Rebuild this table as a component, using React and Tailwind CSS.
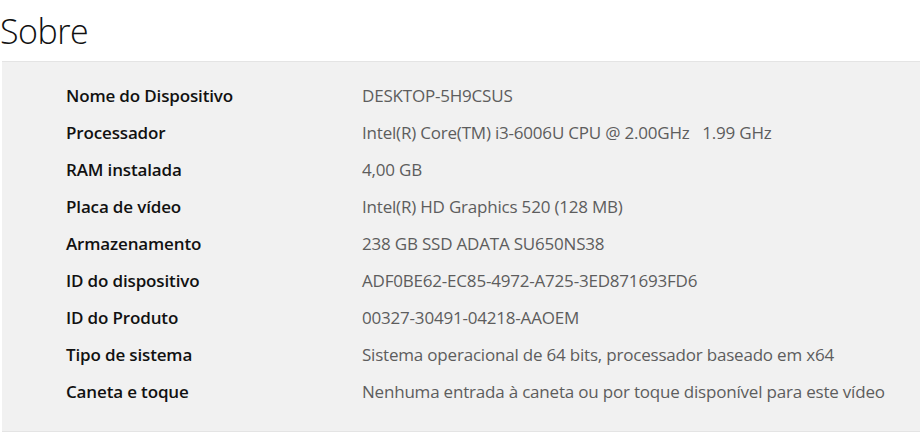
import React from "react";

const specs = [
  ["Nome do Dispositivo", "DESKTOP-5H9CSUS"],
  ["Processador", "Intel(R) Core(TM) i3-6006U CPU @ 2.00GHz   1.99 GHz"],
  ["RAM instalada", "4,00 GB"],
  ["Placa de vídeo", "Intel(R) HD Graphics 520 (128 MB)"],
  ["Armazenamento", "238 GB SSD ADATA SU650NS38"],
  ["ID do dispositivo", "ADF0BE62-EC85-4972-A725-3ED871693FD6"],
  ["ID do Produto", "00327-30491-04218-AAOEM"],
  ["Tipo de sistema", "Sistema operacional de 64 bits, processador baseado em x64"],
  ["Caneta e toque", "Nenhuma entrada à caneta ou por toque disponível para este vídeo"],
];

const App = () => {
  return (
    <div
      className="w-[920px] h-[441px] bg-white overflow-hidden"
      style={{ fontFamily: '"Open Sans", "Noto Sans", sans-serif' }}
    >
      <h1 className="text-[34px] font-light leading-none text-[#111] pt-[14px] h-[61px] tracking-[-0.5px]">
        Sobre
      </h1>

      <section className="ml-[2px] h-[371px] bg-[#f1f1f1] border-t border-b border-[#e4e4e4] pt-[15px]">
        {specs.map(([label, value]) => (
          <div key={label} className="flex h-[37px] items-center text-[17px]">
            <span className="w-[360px] shrink-0 pl-[64px] font-semibold text-[#111] tracking-[-0.15px]">
              {label}
            </span>
            <span className="text-[#5d5d5d] whitespace-pre tracking-[-0.2px]">{value}</span>
          </div>
        ))}
      </section>
    </div>
  );
};

export default App;
